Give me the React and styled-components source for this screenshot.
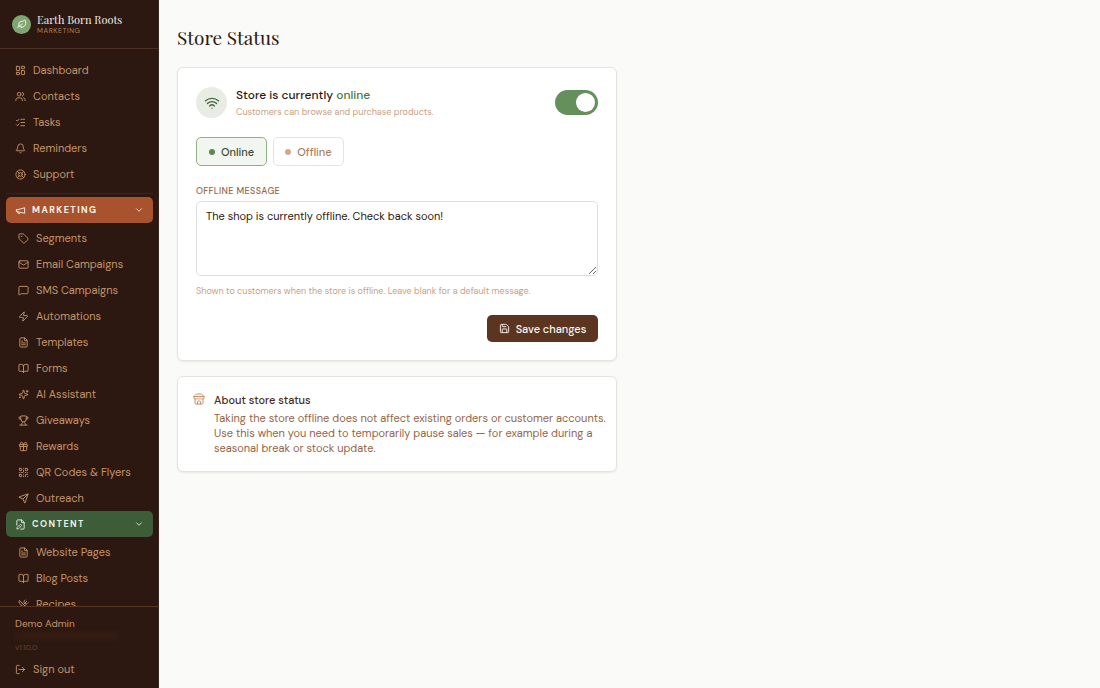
import React, { useState } from 'react';
import styled, { createGlobalStyle } from 'styled-components';
import {
  LayoutDashboard, Users, ListChecks, Bell, LifeBuoy, ChevronDown, Tag, Mail,
  MessageSquare, Zap, FileText, BookOpen, Trophy, Gift, QrCode, Send, FilePen,
  UtensilsCrossed, LogOut, Wifi, Save, Leaf,
} from 'lucide-react';

const GlobalStyle = createGlobalStyle`
  * { box-sizing: border-box; }
  body {
    margin: 0;
    background: #fafaf8;
    font-family: 'DM Sans', Lato, 'Liberation Sans', sans-serif;
    font-size: 11px;
    line-height: 16px;
    color: #2c1810;
  }
  h1, h2, p { margin: 0; font-weight: 400; }
  button, textarea { font: inherit; }
`;

const Shell = styled.div`
  display: flex;
  height: 100vh;
`;

const Sidebar = styled.aside`
  display: flex;
  flex-direction: column;
  flex: 0 0 159px;
  min-height: 0;
  background: #2c1810;
  border-right: 1px solid #3d241a;
  color: #c4956a;
`;

const Brand = styled.div`
  display: flex;
  align-items: center;
  gap: 6px;
  height: 49px;
  flex: none;
  padding: 0 12px;
  border-bottom: 1px solid #4a3024;
`;

const BrandMark = styled.span`
  display: grid;
  place-items: center;
  width: 19px;
  height: 19px;
  border-radius: 50%;
  background: #7fa572;
  color: #fff;
`;

const BrandName = styled.div`
  font-family: 'Playfair Display', 'Liberation Serif', serif;
  font-size: 11px;
  line-height: 13px;
  color: #f5ede4;
  white-space: nowrap;
`;

const BrandArea = styled.div`
  font-size: 7px;
  line-height: 9px;
  letter-spacing: 0.08em;
  color: #b0825c;
`;

const Nav = styled.nav`
  flex: 1;
  min-height: 0;
  overflow: hidden;
  padding: 8px 5px 0 6px;
`;

const NavLink = styled.a`
  display: flex;
  align-items: center;
  gap: 7px;
  height: 26px;
  padding-left: ${(p) => (p.$nested ? 12 : 9)}px;
  color: inherit;
  text-decoration: none;
  white-space: nowrap;
  svg { flex: none; }
`;

const Divider = styled.hr`
  height: 1px;
  margin: 6px 0 3px;
  border: 0;
  background: #3b241a;
`;

const GroupButton = styled.button`
  display: flex;
  align-items: center;
  gap: 6px;
  width: 100%;
  height: 26px;
  margin-bottom: 2px;
  padding: 0 9px;
  border: 0;
  border-radius: 5px;
  background: ${(p) => p.$color};
  color: ${(p) => p.$text};
  font-size: 9px;
  font-weight: 700;
  letter-spacing: 0.16em;
  cursor: pointer;
  span { flex: 1; text-align: left; }
`;

const Account = styled.div`
  flex: none;
  height: 82px;
  padding: 9px 6px 0;
  border-top: 1px solid #56361f;
`;

const AccountName = styled.div`
  padding-left: 9px;
  font-size: 10px;
  line-height: 15px;
`;

const HiddenEmail = styled.div`
  width: 104px;
  height: 9px;
  margin-left: 9px;
  background: #341b12;
  filter: blur(2px);
`;

const Version = styled.div`
  padding: 0 0 2px 9px;
  font-size: 8px;
  line-height: 14px;
  color: #614132;
`;

const Main = styled.main`
  flex: 1;
  min-width: 0;
  padding: 24px 18px;
`;

const Title = styled.h1`
  margin-bottom: 17px;
  font-family: 'Playfair Display', 'Liberation Serif', serif;
  font-size: 19px;
  line-height: 26px;
`;

const Card = styled.section`
  max-width: 440px;
  margin-bottom: 15px;
  padding: ${(p) => (p.$compact ? '15px 9px 15px 15px' : '18px')};
  background: #fff;
  border: 1px solid #e6e4df;
  border-radius: 6px;
  box-shadow: 0 1px 2px rgba(44, 24, 16, 0.08);
`;

const StatusRow = styled.div`
  display: flex;
  align-items: center;
  gap: 9px;
  margin-bottom: 18px;
`;

const StatusIcon = styled.span`
  display: grid;
  place-items: center;
  width: 31px;
  height: 31px;
  border-radius: 50%;
  background: #e7ede5;
  color: #47663f;
`;

const StatusText = styled.div`
  flex: 1;
`;

const StatusTitle = styled.h2`
  font-size: 12px;
  line-height: 19px;
  font-weight: 500;
  span { color: #47753f; }
`;

const Hint = styled.p`
  font-size: 9px;
  line-height: 14px;
  color: #c9a27f;
`;

const Switch = styled.input`
  appearance: none;
  display: flex;
  align-items: center;
  width: 43px;
  height: 25px;
  margin: 0;
  padding: 0 3px;
  border-radius: 13px;
  background: ${(p) => (p.checked ? '#65905c' : '#cfc6bc')};
  cursor: pointer;
  &::before {
    content: '';
    width: 19px;
    height: 19px;
    margin-left: ${(p) => (p.checked ? 'auto' : '0')};
    border-radius: 50%;
    background: #fff;
  }
`;

const Choices = styled.div`
  display: flex;
  gap: 6px;
  margin-bottom: 17px;
`;

const Choice = styled.button`
  display: flex;
  align-items: center;
  justify-content: center;
  gap: 6px;
  width: 71px;
  height: 29px;
  padding: 0;
  border: 1px solid ${(p) => (p.$active ? '#8fb083' : '#e6e4df')};
  border-radius: 5px;
  background: ${(p) => (p.$active ? '#f2f6f1' : '#fff')};
  color: ${(p) => (p.$active ? '#3a4a34' : '#a9805f')};
  font-weight: 500;
  cursor: pointer;
  &::before {
    content: '';
    width: 6px;
    height: 6px;
    border-radius: 50%;
    background: ${(p) => (p.$active ? '#5c8a52' : '#cfa98a')};
  }
`;

const Label = styled.label`
  display: block;
  margin-bottom: 2px;
  font-size: 9px;
  font-weight: 500;
  letter-spacing: 0.04em;
  color: #966847;
  text-transform: uppercase;
`;

const Message = styled.textarea`
  display: block;
  width: 100%;
  height: 75px;
  margin-bottom: 8px;
  padding: 6px 9px;
  border: 1px solid #e0deda;
  border-radius: 5px;
  background: #fff;
  color: #2c1810;
  resize: vertical;
`;

const Actions = styled.div`
  display: flex;
  justify-content: flex-end;
  margin-top: 17px;
`;

const SaveButton = styled.button`
  display: flex;
  align-items: center;
  justify-content: center;
  gap: 6px;
  width: 111px;
  height: 27px;
  padding: 0;
  border: 0;
  border-radius: 5px;
  background: #5c3520;
  color: #fdf6ee;
  font-weight: 500;
  cursor: pointer;
`;

const About = styled.div`
  display: flex;
  gap: 9px;
  svg { flex: none; margin-top: 1px; color: #c98f66; }
`;

const AboutTitle = styled.h2`
  margin-bottom: 3px;
  font-size: 11px;
  line-height: 16px;
  font-weight: 500;
  color: #4a2a1b;
`;

const AboutText = styled.p`
  line-height: 15px;
  color: #966446;
`;

const LineIcon = ({ size, paths }) => (
  <svg
    width={size}
    height={size}
    viewBox="0 0 24 24"
    fill="none"
    stroke="currentColor"
    strokeWidth="2"
    strokeLinecap="round"
    strokeLinejoin="round"
    aria-hidden="true"
  >
    {paths.map((d) => <path key={d} d={d} />)}
  </svg>
);

const Megaphone = ({ size }) => (
  <LineIcon size={size} paths={['m3 11 18-5v12L3 14v-3z', 'M11.6 16.8a3 3 0 1 1-5.8-1.6']} />
);

const Sparkles = ({ size }) => (
  <LineIcon
    size={size}
    paths={[
      'M9.937 15.5A2 2 0 0 0 8.5 14.063l-6.135-1.582a.5.5 0 0 1 0-.962L8.5 9.936A2 2 0 0 0 9.937 8.5l1.582-6.135a.5.5 0 0 1 .963 0L14.063 8.5A2 2 0 0 0 15.5 9.937l6.135 1.581a.5.5 0 0 1 0 .964L15.5 14.063a2 2 0 0 0-1.437 1.437l-1.582 6.135a.5.5 0 0 1-.963 0z',
      'M20 3v4',
      'M22 5h-4',
      'M4 17v2',
      'M5 18H3',
    ]}
  />
);

const Storefront = ({ size }) => (
  <LineIcon
    size={size}
    paths={[
      'm2 7 4.41-4.41A2 2 0 0 1 7.83 2h8.34a2 2 0 0 1 1.42.59L22 7',
      'M4 12v8a2 2 0 0 0 2 2h12a2 2 0 0 0 2-2v-8',
      'M15 22v-4a2 2 0 0 0-2-2h-2a2 2 0 0 0-2 2v4',
      'M2 7h20',
      'M22 7v3a2 2 0 0 1-2 2a2.7 2.7 0 0 1-1.59-.63.7.7 0 0 0-.82 0A2.7 2.7 0 0 1 16 12a2.7 2.7 0 0 1-1.59-.63.7.7 0 0 0-.82 0A2.7 2.7 0 0 1 12 12a2.7 2.7 0 0 1-1.59-.63.7.7 0 0 0-.82 0A2.7 2.7 0 0 1 8 12a2.7 2.7 0 0 1-1.59-.63.7.7 0 0 0-.82 0A2.7 2.7 0 0 1 4 12a2 2 0 0 1-2-2V7',
    ]}
  />
);

const general = [
  ['Dashboard', LayoutDashboard],
  ['Contacts', Users],
  ['Tasks', ListChecks],
  ['Reminders', Bell],
  ['Support', LifeBuoy],
];

const marketing = [
  ['Segments', Tag],
  ['Email Campaigns', Mail],
  ['SMS Campaigns', MessageSquare],
  ['Automations', Zap],
  ['Templates', FileText],
  ['Forms', BookOpen],
  ['AI Assistant', Sparkles],
  ['Giveaways', Trophy],
  ['Rewards', Gift],
  ['QR Codes & Flyers', QrCode],
  ['Outreach', Send],
];

const content = [
  ['Website Pages', FileText],
  ['Blog Posts', BookOpen],
  ['Recipes', UtensilsCrossed],
];

const Links = ({ items, nested }) =>
  items.map(([name, Icon]) => (
    <NavLink href="#" key={name} $nested={nested}>
      <Icon size={11} />
      {name}
    </NavLink>
  ));

const Group = ({ name, icon: Icon, color, text, items }) => {
  const [open, setOpen] = useState(true);
  return (
    <>
      <GroupButton type="button" $color={color} $text={text} aria-expanded={open} onClick={() => setOpen(!open)}>
        <Icon size={11} />
        <span>{name}</span>
        <ChevronDown size={10} />
      </GroupButton>
      {open && <Links items={items} nested />}
    </>
  );
};

export default function App() {
  const [online, setOnline] = useState(true);
  const [message, setMessage] = useState('The shop is currently offline. Check back soon!');
  return (
    <Shell>
      <GlobalStyle />
      <Sidebar>
        <Brand>
          <BrandMark><Leaf size={10} /></BrandMark>
          <div>
            <BrandName>Earth Born Roots</BrandName>
            <BrandArea>MARKETING</BrandArea>
          </div>
        </Brand>
        <Nav>
          <Links items={general} />
          <Divider />
          <Group name="MARKETING" icon={Megaphone} color="#a8522e" text="#fbf3ea" items={marketing} />
          <Group name="CONTENT" icon={FilePen} color="#3d5c38" text="#e9f1e6" items={content} />
        </Nav>
        <Account>
          <AccountName>Demo Admin</AccountName>
          <HiddenEmail />
          <Version>v1.10.0</Version>
          <NavLink href="#"><LogOut size={11} />Sign out</NavLink>
        </Account>
      </Sidebar>
      <Main>
        <Title>Store Status</Title>
        <Card>
          <StatusRow>
            <StatusIcon><Wifi size={16} /></StatusIcon>
            <StatusText>
              <StatusTitle>Store is currently <span>{online ? 'online' : 'offline'}</span></StatusTitle>
              <Hint>Customers can browse and purchase products.</Hint>
            </StatusText>
            <Switch
              type="checkbox"
              role="switch"
              aria-label="Store online"
              checked={online}
              onChange={(e) => setOnline(e.target.checked)}
            />
          </StatusRow>
          <Choices>
            <Choice type="button" $active={online} onClick={() => setOnline(true)}>Online</Choice>
            <Choice type="button" $active={!online} onClick={() => setOnline(false)}>Offline</Choice>
          </Choices>
          <Label htmlFor="offline-message">Offline message</Label>
          <Message id="offline-message" value={message} onChange={(e) => setMessage(e.target.value)} />
          <Hint>Shown to customers when the store is offline. Leave blank for a default message.</Hint>
          <Actions>
            <SaveButton type="button"><Save size={11} />Save changes</SaveButton>
          </Actions>
        </Card>
        <Card $compact>
          <About>
            <Storefront size={12} />
            <div>
              <AboutTitle>About store status</AboutTitle>
              <AboutText>
                Taking the store offline does not affect existing orders or customer accounts. Use this when
                you need to temporarily pause sales — for example during a seasonal break or stock update.
              </AboutText>
            </div>
          </About>
        </Card>
      </Main>
    </Shell>
  );
}
